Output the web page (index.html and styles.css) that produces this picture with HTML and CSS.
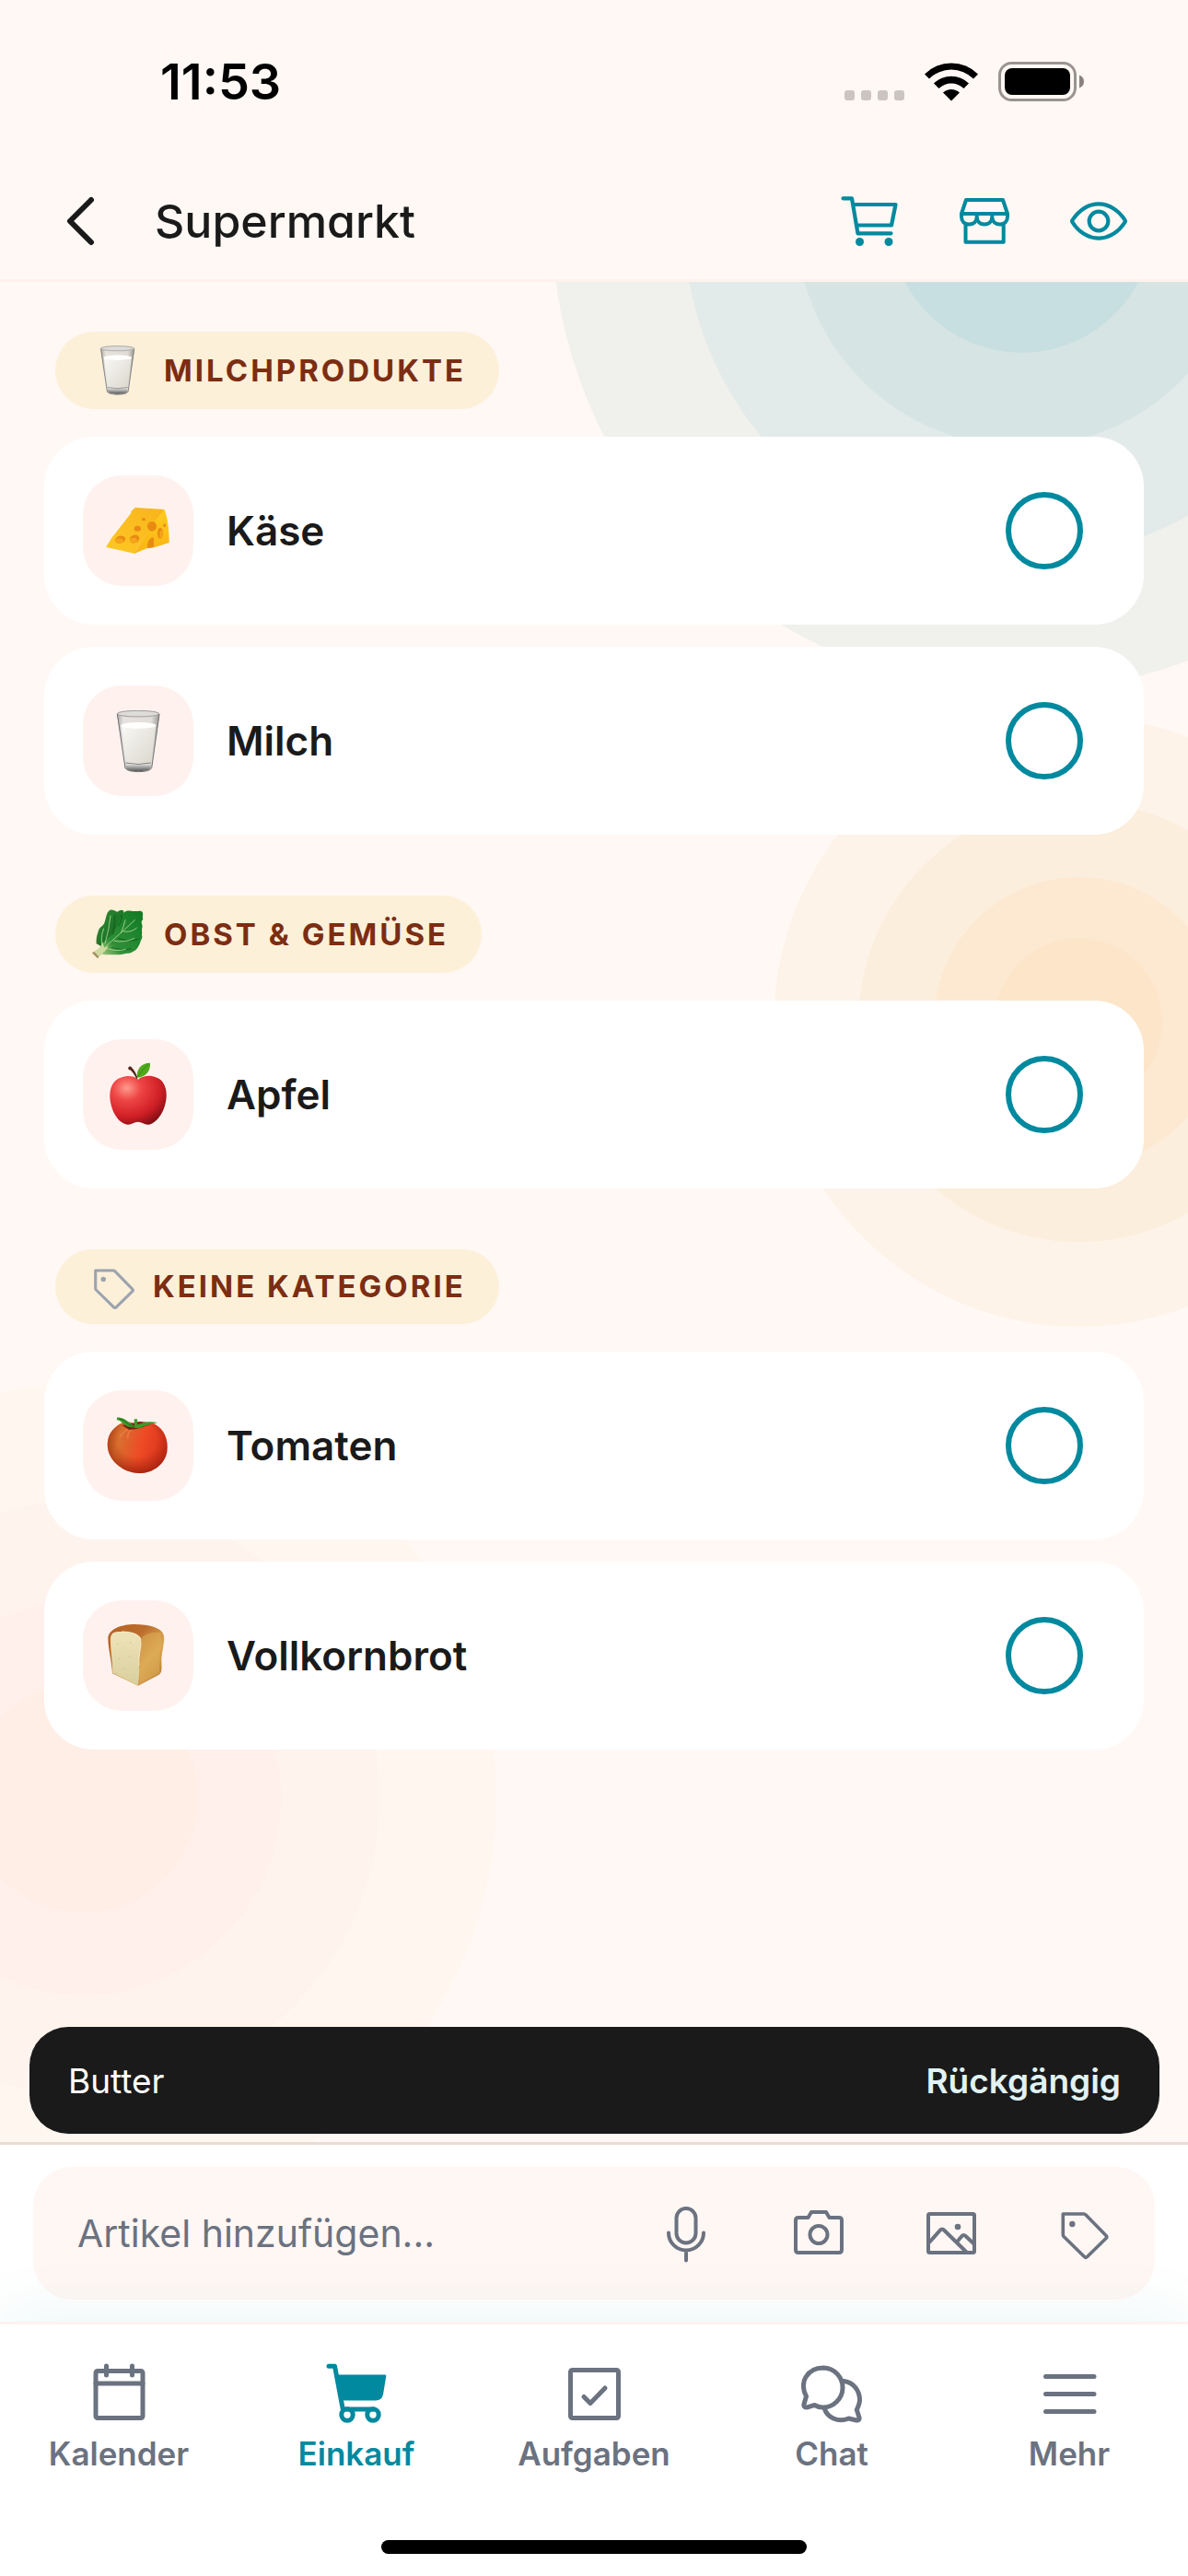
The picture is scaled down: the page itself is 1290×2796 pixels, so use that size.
FILE: index.html
```html
<!DOCTYPE html>
<html lang="de">
<head>
    <meta charset="UTF-8">
    <meta name="viewport" content="width=device-width, initial-scale=1.0">
    <title>Supermarkt</title>
    <link rel="stylesheet" href="styles.css">
</head>
<body>
    <!-- Shared drawings -->
    <svg class="defs" aria-hidden="true">
        <defs>
            <linearGradient id="milkGlass" x1="0" x2="1"><stop offset="0" stop-color="#8f8f8f"/><stop offset=".15" stop-color="#dedddb"/><stop offset=".8" stop-color="#d8d7d5"/><stop offset="1" stop-color="#777"/></linearGradient>
            <linearGradient id="milkFill" x1="0" x2="1" y1="0" y2="1"><stop offset="0" stop-color="#fafaf7"/><stop offset="1" stop-color="#d9d6cb"/></linearGradient>
            <linearGradient id="milkBase" x1="0" x2="0" y1="0" y2="1"><stop offset="0" stop-color="#e9e9e7"/><stop offset="1" stop-color="#555"/></linearGradient>
            <linearGradient id="cheeseTop" x1="0" x2="1" y1="1" y2="0"><stop offset="0" stop-color="#fdc823"/><stop offset="1" stop-color="#f8b41d"/></linearGradient>
            <linearGradient id="cheeseSide" x1="0" x2="0" y1="0" y2="1"><stop offset="0" stop-color="#ffcb1f"/><stop offset="1" stop-color="#f9b414"/></linearGradient>
            <radialGradient id="appleSkin" cx=".3" cy=".25" r=".85"><stop offset="0" stop-color="#ff9a8c"/><stop offset=".3" stop-color="#ee4545"/><stop offset=".7" stop-color="#cf1f26"/><stop offset="1" stop-color="#7d0d12"/></radialGradient>
            <linearGradient id="tomatoSkin" x1="0" x2="1" y1=".2" y2=".4"><stop offset="0" stop-color="#c25a20"/><stop offset=".2" stop-color="#d8702f"/><stop offset=".6" stop-color="#ee4a25"/><stop offset="1" stop-color="#d8341c"/></linearGradient>
            <radialGradient id="tomatoShade" cx=".5" cy=".35" r=".65"><stop offset=".5" stop-color="#9c1d08" stop-opacity="0"/><stop offset="1" stop-color="#8f1a08" stop-opacity=".7"/></radialGradient>
            <linearGradient id="breadCrust" x1="0" x2="1" y1="0" y2="1"><stop offset="0" stop-color="#b76124"/><stop offset=".35" stop-color="#bb6b2b"/><stop offset=".65" stop-color="#dba753"/><stop offset="1" stop-color="#b06d2a"/></linearGradient>
            <linearGradient id="breadCrumb" x1="0" x2="0" y1="0" y2="1"><stop offset="0" stop-color="#efe3ba"/><stop offset="1" stop-color="#d9cf9d"/></linearGradient>
            <linearGradient id="leafBack" x1="0" x2="1" y1="0" y2="1"><stop offset="0" stop-color="#2f8f35"/><stop offset="1" stop-color="#0d5a1c"/></linearGradient>
            <linearGradient id="leafFront" x1="1" x2="0" y1="0" y2="1"><stop offset="0" stop-color="#0f7a23"/><stop offset=".7" stop-color="#2f8f38"/><stop offset="1" stop-color="#b8d28a"/></linearGradient>
        </defs>
        <symbol id="milk" viewBox="80 80 200 204">
            <path d="M111 93l26 175c1 17 86 17 87 0l26-175c-10 14-129 14-139 0z" fill="url(#milkGlass)" opacity=".75"/>
            <path d="M124 128q56-18 114 0l-16 124q-40 10-80 0z" fill="url(#milkFill)"/>
            <ellipse cx="181" cy="130" rx="57" ry="10" fill="#fff"/>
            <path d="M138 254q42 8 85 0l-2 15c-8 14-74 14-81 0z" fill="url(#milkBase)"/>
            <path d="M139 252q42 9 83 0" fill="none" stroke="#555" stroke-width="2"/>
            <ellipse cx="180" cy="92" rx="68" ry="10" fill="#dedcda" stroke="#8c8c8c" stroke-width="2.500"/>
            <path d="M112 93l26 176c6 16 80 16 86 0l25-176" fill="none" stroke="#707070" stroke-width="3"/>
        </symbol>
        <symbol id="tag" viewBox="0 0 66 66">
            <path d="M10.300 12H33q1 0 2 1l22 22.500q1.500 1.500 0 3L36.500 58.500q-1.500 1.500-3 0L11 36.500q-.7-.7-.7-1.700z" fill="none" stroke="currentColor" stroke-width="3.600" stroke-linejoin="round"/>
            <circle cx="20.300" cy="23" r="3.200" fill="currentColor" stroke="none"/>
        </symbol>
    </svg>

    <header class="header">
        <div class="status-bar">
            <time class="clock">11:53</time>
            <div class="status-icons">
                <svg width="65" height="43" viewBox="0 0 65 43" fill="#cbc5c2">
                    <rect y="31" width="11" height="11" rx="3"/><rect x="18" y="31" width="11" height="11" rx="3"/>
                    <rect x="36" y="31" width="11" height="11" rx="3"/><rect x="54" y="31" width="11" height="11" rx="3"/>
                </svg>
                <svg width="58" height="43" viewBox="0 0 58 43">
                    <path d="M0 13.500a41 41 0 0 1 58 0l-5 5a34 34 0 0 0-48 0z"/>
                    <path d="M10 23.500a27 27 0 0 1 38 0l-5.500 5.500a19.500 19.500 0 0 0-27 0z"/>
                    <path d="M20 33.500a13 13 0 0 1 18 0l-9 9z"/>
                </svg>
                <svg width="94" height="43" viewBox="0 0 94 43">
                    <rect x="1.500" y="1.500" width="82" height="40" rx="13" fill="none" stroke="#999491" stroke-width="3"/>
                    <rect x="7" y="7" width="71" height="29" rx="8"/>
                    <path d="M88 14.500q5 2 5 7t-5 7z" fill="#88837f"/>
                </svg>
            </div>
        </div>
        <div class="title-row">
            <button class="icon-btn back" aria-label="Zurück">
                <svg viewBox="0 0 72 72" fill="none" stroke="#1a1a1a" stroke-width="6" stroke-linecap="round" stroke-linejoin="round"><path d="M47 13L24 36l23 23"/></svg>
            </button>
            <h1 class="title">Supermarkt</h1>
            <div class="actions">
                <button class="icon-btn" aria-label="Einkaufswagen">
                    <svg viewBox="0 0 72 72" fill="none" stroke="currentColor" stroke-width="4.200" stroke-linecap="round" stroke-linejoin="round">
                        <path d="M6.500 11.300H16l6.500 38H58.500M18 18H63.500L59 40.500H21.500"/>
                        <circle cx="24.500" cy="58.500" r="4.500" fill="currentColor" stroke="none"/><circle cx="56" cy="58.500" r="4.500" fill="currentColor" stroke="none"/>
                    </svg>
                </button>
                <button class="icon-btn" aria-label="Geschäft">
                    <svg viewBox="0 0 72 72" fill="none" stroke="currentColor" stroke-width="4" stroke-linejoin="round">
                        <path d="M16 13H56L61 28V31c0 5-3 8.500-8.300 8.500S44.300 36 44.300 31c0 5-3 8.500-8.300 8.500S27.700 36 27.700 31c0 5-3 8.500-8.400 8.500S11 36 11 31V28zM11 28H61M27.700 28v4M44.300 28v4M15.500 39V58.700H56.700V39"/>
                    </svg>
                </button>
                <button class="icon-btn" aria-label="Ansicht">
                    <svg viewBox="-23 -23 558 558" fill="none" stroke="currentColor" stroke-width="32" stroke-linejoin="round">
                        <path d="M256 112c-78 0-158 45-221 135a16 16 0 0 0 0 18c48 76 127 135 221 135 93 0 173-59 221-135a16 16 0 0 0 0-18C429 172 348 112 256 112z"/><circle cx="256" cy="256" r="80"/>
                    </svg>
                </button>
            </div>
        </div>
    </header>

    <main class="content">
        <svg class="rings" aria-hidden="true">
            <g><circle cx="86%" cy="-66" r="510" fill="#f0f0ed"/><circle cx="86%" cy="-66" r="367" fill="#e2ebe9"/><circle cx="86%" cy="-66" r="245" fill="#d6e5e4"/><circle cx="86%" cy="-66" r="143" fill="#c8dfe1"/></g>
            <g><circle cx="90.8%" cy="803" r="331" fill="#fdf3e9"/><circle cx="90.8%" cy="803" r="239" fill="#fceedc"/><circle cx="90.8%" cy="803" r="157" fill="#fde9d2"/><circle cx="90.8%" cy="803" r="91" fill="#fde5c9"/></g>
            <g><circle cx="7%" cy="1645" r="449" fill="#fff6f0"/><circle cx="7%" cy="1645" r="322" fill="#fef3ed"/><circle cx="7%" cy="1645" r="215" fill="#fff0ec"/><circle cx="7%" cy="1645" r="125" fill="#ffeee6"/></g>
        </svg>

        <section class="group">
            <h2 class="category"><svg class="category-emoji" viewBox="0 0 60 54"><use href="#milk" x="1" width="53" height="54"/></svg>Milchprodukte</h2>
            <ul class="items">
                <li class="item">
                    <span class="tile"><svg viewBox="0 0 360 360">
                        <path d="M76 233l20-32 27-18-1-12 22-22 14-20-1-12 14-12 58 10-38 62-20 78z" fill="url(#cheeseTop)"/>
                        <path d="M171 105l86 5 9 2-56 74-42 67-92-20 20-32z" fill="url(#cheeseTop)"/>
                        <path d="M266 111c9 25 15 60 15 108l-47 15-24 3-42 17 42-70z" fill="url(#cheeseSide)"/>
                        <g fill="#e88b12"><ellipse cx="122" cy="209" rx="17" ry="12" transform="rotate(-15 122 209)"/><ellipse cx="168" cy="207" rx="16" ry="13" transform="rotate(-20 168 207)"/><ellipse cx="178" cy="173" rx="11" ry="9"/><ellipse cx="198" cy="143" rx="6" ry="5"/><ellipse cx="225" cy="166" rx="15" ry="16"/><ellipse cx="252" cy="188" rx="9" ry="18"/><ellipse cx="266" cy="163" rx="4" ry="6"/><path d="M211 237c-4-18 7-37 20-34v31z"/></g>
                        <g fill="#f5a51b"><ellipse cx="119" cy="213" rx="13" ry="8"/><ellipse cx="165" cy="211" rx="12" ry="8"/><ellipse cx="255" cy="192" rx="5" ry="13"/></g>
                    </svg></span>
                    <label for="kaese">Käse</label>
                    <input type="checkbox" id="kaese">
                </li>
                <li class="item">
                    <span class="tile"><svg viewBox="0 0 360 360"><use href="#milk" x="80" y="80" width="200" height="204"/></svg></span>
                    <label for="milch">Milch</label>
                    <input type="checkbox" id="milch">
                </li>
            </ul>
        </section>

        <section class="group">
            <h2 class="category"><svg class="category-emoji" viewBox="28 46 180 162">
                <path d="M42 158c-2-18 4-34 8-46 4-10 14-12 18-22 6-16 6-34 18-42 10-2 16 2 24 6 8-6 14-8 20-4l14 60-60 70z" fill="url(#leafBack)"/>
                <path d="M44 190c8-24 28-44 50-64 14-14 20-52 40-72 12-8 24 0 34-2 12 0 20-4 24 4 4 8-2 12 2 22-8 8-4 14-2 24-4 10 0 18-2 28 4 10-4 16-6 26-6 12-8 20-20 26-12 10-24 6-36 10-22 4-38 0-56 2z" fill="url(#leafFront)"/>
                <path d="M112 100q14-12 12-36M96 128q6-36 6-64M112 140q38 14 68 2M92 170q38 12 64 4" fill="none" stroke="#0a5a18" stroke-width="4" opacity=".6"/>
                <path d="M44 194c38-38 80-72 124-114M70 158Q84 110 88 66M62 166Q54 140 66 108M122 124q10-24 14-44M98 148q36 8 68-8M130 118q26 4 44-12M76 174q32 10 62 2" fill="none" stroke="#b5d894" stroke-width="2.500"/>
                <path d="M28 188l18 18 12-12 16-16 8-14-14 8-6-20-6 16z" fill="#cfdba0"/>
                <path d="M28 188l18 18 4-6-15-16z" fill="#a8906c"/>
            </svg>Obst &amp; Gemüse</h2>
            <ul class="items">
                <li class="item">
                    <span class="tile"><svg viewBox="0 0 360 360">
                        <path d="M180 131C160 112 120 120 103 138c-20 22-18 60-6 92 10 26 30 47 50 48 12 0 20-9 32-9 14 0 20 9 34 9 20-1 40-26 50-50 12-30 14-66-4-90-18-20-56-26-79-7z" fill="url(#appleSkin)"/>
                        <path d="M148 96c-2-8 8-10 11-4 8 8 16 20 19 34l-3 4c-6-14-14-24-21-30-3 1-5-1-6-4z" fill="#552318"/>
                        <path d="M177 125c-4-26 12-48 42-48 2 24-12 46-42 48z" fill="#51a81c"/>
                        <path d="M179 122q14-24 36-42" fill="none" stroke="#2f7d0e" stroke-width="2"/>
                    </svg></span>
                    <label for="apfel">Apfel</label>
                    <input type="checkbox" id="apfel">
                </li>
            </ul>
        </section>

        <section class="group">
            <h2 class="category"><svg class="category-tag" viewBox="6 5 56 56"><use href="#tag" width="66" height="66"/></svg>Keine Kategorie</h2>
            <ul class="items">
                <li class="item">
                    <span class="tile"><svg viewBox="0 0 360 360">
                        <path d="M174 112c-20-14-50-10-70 10-24 20-28 54-20 80 14 42 60 68 98 68 44 0 84-26 92-70 6-40-10-74-40-90-22-10-44-8-60 2z" fill="url(#tomatoSkin)"/>
                        <path d="M174 112c-20-14-50-10-70 10-24 20-28 54-20 80 14 42 60 68 98 68 44 0 84-26 92-70 6-40-10-74-40-90-22-10-44-8-60 2z" fill="url(#tomatoShade)"/>
                        <path d="M122 150q12-18 24-22M146 156q0-20 12-26" stroke="#ffa079" stroke-width="5" fill="none" opacity=".35" stroke-linecap="round"/>
                        <path d="M128 114l22 14 26-2 26-8 18-8q-30-14-50-4z" fill="#7c1b0d"/>
                        <path d="M112 88q20 2 32 12l24 16-1-22h10l1 18q30-14 66-6-28 4-52 14-12 6-22 2-26 0-40-14-8-10-20-12z" fill="#3c9a2a"/>
                        <path d="M118 92q16 4 30 18l20 10" fill="none" stroke="#1c6b16" stroke-width="3"/>
                    </svg></span>
                    <label for="tomaten">Tomaten</label>
                    <input type="checkbox" id="tomaten">
                </li>
                <li class="item">
                    <span class="tile"><svg viewBox="0 0 360 360">
                        <path d="M82 125c0-26 30-44 80-47 50-1 92 10 100 32 8 18-4 50-6 80 0 30 4 45-8 52l-68 36-84-40c-2-40-14-80-14-113z" fill="url(#breadCrust)"/>
                        <path d="M190 124c10-14 40-24 64-18 4 40-8 90-4 130l-66 36z" fill="#dfae5a" opacity=".55"/>
                        <path d="M90 122c2-18 16-21 36-20 30 0 58 8 62 24 4 30-8 50-5 86 2 24-2 50-3 65l-83-41c0-40-9-80-7-114z" fill="url(#breadCrumb)"/>
                        <path d="M126 102c30 0 58 8 62 24 4 30-8 50-5 86" fill="none" stroke="#f7edc9" stroke-width="3"/>
                        <path d="M112 140l4 4m20 10l3 2m14-20l4 3m-40 50l4 3m30-12l3 4m-20 40l4-3m28 20l3 3m-60-8l3 4" stroke="#c9bd88" stroke-width="3"/>
                    </svg></span>
                    <label for="vollkornbrot">Vollkornbrot</label>
                    <input type="checkbox" id="vollkornbrot">
                </li>
            </ul>
        </section>

        <div class="toast" role="status">
            <span>Butter</span>
            <button class="undo">Rückgängig</button>
        </div>
    </main>

    <form class="composer">
        <div class="field">
            <input type="text" class="field-input" placeholder="Artikel hinzufügen..." aria-label="Artikel hinzufügen">
            <button type="button" class="field-btn" aria-label="Diktieren">
                <svg viewBox="0 0 66 66"><rect x="22.500" y="6" width="21" height="37.500" rx="10.500"/><path d="M14 32.500a19 19 0 0 0 38 0M33 51.500v11"/></svg>
            </button>
            <button type="button" class="field-btn" aria-label="Kamera">
                <svg viewBox="0 0 66 66"><path d="M11 16h10.500l3.500-6h16l3.500 6H55q3 0 3 3v32q0 3-3 3H11q-3 0-3-3V19q0-3 3-3z"/><circle cx="33" cy="34.500" r="9.500"/></svg>
            </button>
            <button type="button" class="field-btn" aria-label="Bild">
                <svg viewBox="0 0 66 66"><rect x="8" y="12" width="50" height="42" rx="1.500"/><path d="M9 43l12-13.500q2-2 4 0L49 53M39 42.500l5.500-6.500q2-2 4 0L58 45"/><circle cx="40" cy="26" r="3.300" fill="currentColor" stroke="none"/></svg>
            </button>
            <button type="button" class="field-btn" aria-label="Kategorie">
                <svg viewBox="0 0 66 66"><use href="#tag" width="66" height="66"/></svg>
            </button>
        </div>
    </form>

    <footer class="footer">
        <nav class="tabs">
            <a class="tab" href="#kalender">
                <svg viewBox="0 0 66 66"><rect x="8" y="9.500" width="51" height="51" rx="2"/><path d="M8 23H59M19.500 4v10M47.500 4v10"/></svg>
                Kalender
            </a>
            <a class="tab active" href="#einkauf" aria-current="page">
                <svg viewBox="0 0 66 66"><path d="M3 4.200H9.500L18.300 51H52"/><path d="M12 13.600H64q1.500 0 1.300 1.500L62 35q-1.500 6.500-8 6.500H17z" fill="currentColor" stroke="none"/><circle cx="23" cy="57" r="6.200"/><circle cx="51" cy="57" r="6.200"/></svg>
                Einkauf
            </a>
            <a class="tab" href="#aufgaben">
                <svg viewBox="0 0 66 66"><rect x="7.500" y="8.500" width="52" height="52" rx="2"/><path d="M22 37.500l7 7L45 28"/></svg>
                Aufgaben
            </a>
            <a class="tab" href="#chat">
                <svg viewBox="0 0 66 66"><path d="M24 6a21.500 21.500 0 1 1-1 43c-3 0-6-1-8.500-2.500-3 .5-7 2.500-9 2.500-2 0-3-1.500-2.500-3.500L5.500 37C1.500 30 1.500 21.500 5 16 9 9.500 16 6 24 6z"/><path d="M46.500 20.500C57 22 63.500 31 63.500 41c0 4-1.500 7-3.200 10.500L63 60c.5 2-1 3.500-3 3l-8.500-2C40 66 28 60 25 49.500"/></svg>
                Chat
            </a>
            <a class="tab" href="#mehr">
                <svg viewBox="0 0 66 66"><path d="M7.500 15.500H60M7.500 34.500H60M7.500 53.500H60"/></svg>
                Mehr
            </a>
        </nav>
        <div class="home-indicator"></div>
    </footer>
</body>
</html>
```
FILE: styles.css
```css
* {
    box-sizing: border-box;
}
body {
    display: flex;
    flex-direction: column;
    min-height: 100vh;
    margin: 0;
    background-color: #fff8f4;
    color: #1a1a1a;
    font-family: Inter, "Liberation Sans", sans-serif;
}
button {
    padding: 0;
    border: none;
    background: none;
    font: inherit;
    color: inherit;
    cursor: pointer;
}
svg {
    display: block;
    flex: none;
}
.defs {
    position: absolute;
    width: 0;
    height: 0;
}

/* Header */
.header {
    border-bottom: 3px solid #fff2ed;
}
.status-bar {
    display: flex;
    justify-content: space-between;
    align-items: center;
    height: 176px;
    padding: 0 112px 0 174px;
}
.clock {
    color: #000;
    font-size: 54px;
    font-weight: 600;
}
.status-icons {
    display: flex;
    gap: 22px;
}
.title-row {
    display: flex;
    align-items: center;
    height: 127px;
    padding: 0 61px 0 52px;
}
.icon-btn {
    width: 72px;
    height: 72px;
}
.icon-btn svg {
    width: 72px;
    height: 72px;
}
.title {
    flex: 1;
    margin: 0 0 0 44px;
    font-size: 50px;
    font-weight: 500;
    font-feature-settings: "cv11";
}
.actions {
    display: flex;
    gap: 52px;
    color: #00899f;
}

/* List */
.content {
    position: relative;
    display: flex;
    flex: 1;
    flex-direction: column;
    gap: 66px;
    padding: 54px 48px 9px;
    overflow: hidden;
}
.rings {
    position: absolute;
    top: 0;
    left: 0;
    width: 100%;
    height: 100%;
}
.group {
    position: relative;
}
.category {
    display: flex;
    align-items: center;
    gap: 18px;
    width: fit-content;
    margin: 0 0 30px 12px;
    padding: 15px 36px 15px 40px;
    border-radius: 42px;
    background-color: #fdf0d9;
    color: #7c2d12;
    font-size: 33px;
    font-weight: 700;
    line-height: 51px;
    letter-spacing: 3px;
    text-transform: uppercase;
}
.category-emoji {
    width: 60px;
    height: 54px;
}
.category-tag {
    width: 48px;
    height: 48px;
    color: #9ca3af;
}
.items {
    display: flex;
    flex-direction: column;
    gap: 24px;
    margin: 0;
    padding: 0;
    list-style: none;
}
.item {
    display: flex;
    align-items: center;
    gap: 36px;
    padding: 42px 66px 42px 42px;
    border-radius: 54px;
    background-color: #fff;
}
.item label {
    flex: 1;
    font-size: 44px;
    font-weight: 600;
}
.item input {
    width: 84px;
    height: 84px;
    margin: 0;
    border: 6px solid #00899f;
    border-radius: 50%;
    appearance: none;
}
.item input:checked {
    background-color: #00899f;
}
.tile {
    width: 120px;
    height: 120px;
    border-radius: 42px;
    background-color: #fff2ee;
}

/* Undo message */
.toast {
    position: relative;
    display: flex;
    justify-content: space-between;
    align-items: center;
    height: 116px;
    margin: auto -17px 0 -16px;
    padding: 0 42px;
    border-radius: 42px;
    background-color: #1a1a1a;
    color: #fff;
    font-size: 37px;
}
.undo {
    color: #e0f2f4;
    font-weight: 600;
}

/* Add an item */
.composer {
    padding: 24px 36px;
    border-top: 3px solid #e8ddd3;
    background-color: #fff;
}
.field {
    display: flex;
    align-items: center;
    gap: 78px;
    height: 144px;
    padding: 0 44px 0 48px;
    border-radius: 42px;
    background-color: #fff7f4;
}
.field-input {
    flex: 1;
    min-width: 0;
    padding: 0;
    border: none;
    outline: none;
    background: none;
    color: #1a1a1a;
    font: inherit;
    font-size: 41px;
}
.field-input::placeholder {
    color: #6b7280;
    opacity: 1;
}
.field-btn {
    color: #6b7280;
}
.field-btn svg,
.tab svg {
    width: 66px;
    height: 66px;
    fill: none;
    stroke: currentColor;
    stroke-width: 4;
    stroke-linecap: round;
    stroke-linejoin: round;
}

/* Bottom navigation */
.footer {
    position: relative;
    padding: 41px 0 24px;
    border-top: 3px solid #fff2ee;
    background-color: #fff;
    box-shadow: 0 -12px 60px rgba(0, 137, 160, 0.07);
}
.tabs {
    display: grid;
    grid-template-columns: repeat(5, 1fr);
}
.tab {
    display: flex;
    flex-direction: column;
    align-items: center;
    gap: 12px;
    color: #6b7280;
    font-size: 35px;
    font-weight: 600;
    line-height: 42px;
    text-decoration: none;
}
.tab svg {
    stroke-width: 5;
}
.tab.active {
    color: #00899f;
}
.home-indicator {
    width: 462px;
    height: 15px;
    margin: 73px auto 0;
    border-radius: 8px;
    background-color: #000;
}
```
